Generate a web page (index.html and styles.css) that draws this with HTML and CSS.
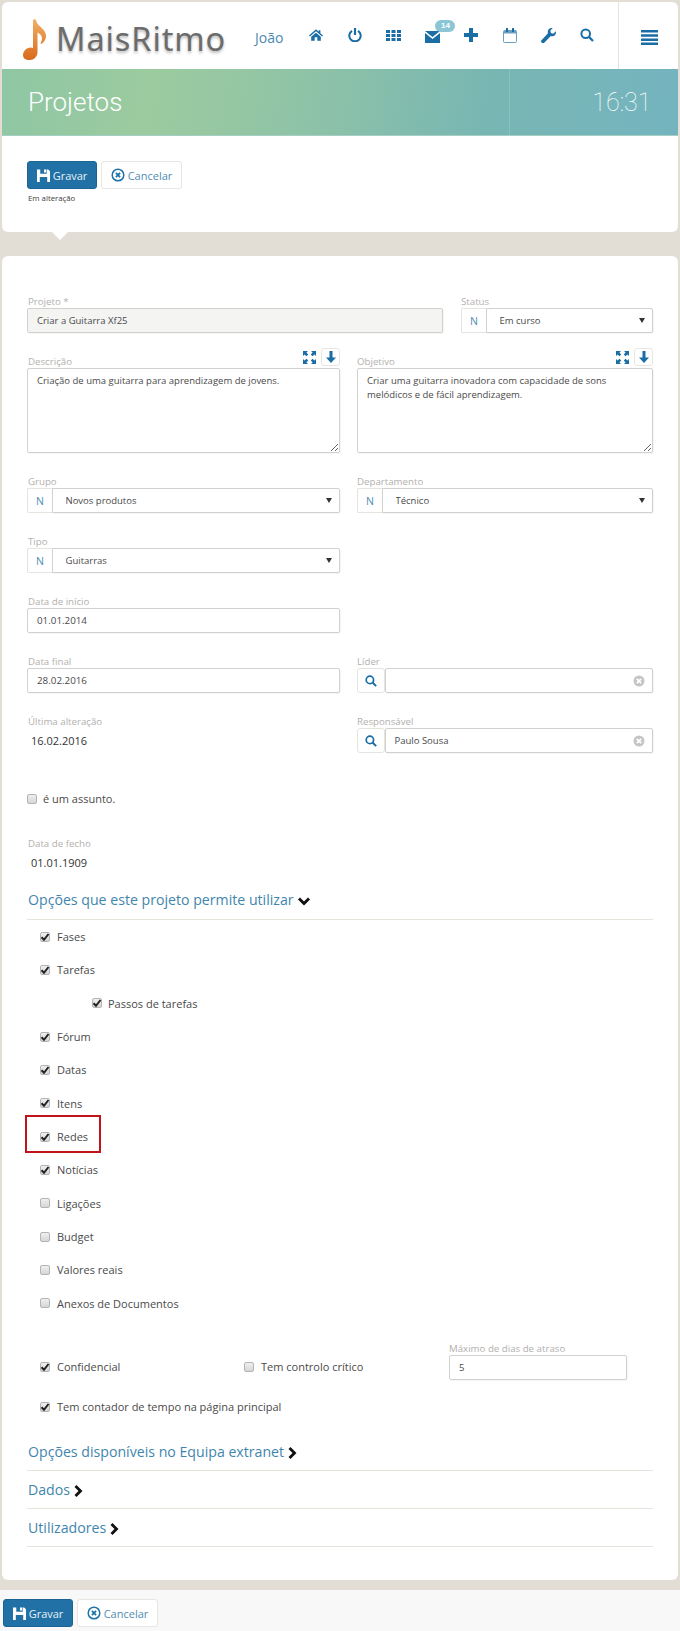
FILE: index.html
```html
<!DOCTYPE html>
<html lang="pt">
<head>
<meta charset="utf-8">
<title>Projetos</title>
<link rel="stylesheet" href="styles.css">
</head>
<body>
<svg class="defs" width="0" height="0" aria-hidden="true">
  <symbol id="i-save" viewBox="0 0 14 14"><path d="M0 .5h3.500v4.500h7V.5H12l2 2V14h-3V8.500H3V14H0z"/><path d="M7.500 .5H10v3.300H7.500z"/></symbol>
  <symbol id="i-cancel" viewBox="0 0 14 14"><circle cx="7" cy="7" r="5.800" fill="none" stroke="currentColor" stroke-width="1.500"/><path d="M4.900 4.900l4.200 4.200M9.100 4.900L4.900 9.100" stroke="currentColor" stroke-width="1.800" fill="none"/></symbol>
  <symbol id="i-clear" viewBox="0 0 12 12"><circle cx="6" cy="6" r="5.500"/><path d="M3.800 3.800l4.400 4.400M8.200 3.800L3.800 8.200" stroke="#fff" stroke-width="1.800" fill="none"/></symbol>
  <symbol id="i-search" viewBox="0 0 14 14"><circle cx="5.700" cy="5.700" r="4.300" fill="none" stroke="currentColor" stroke-width="2"/><path d="M8.800 8.800L13 13" stroke="currentColor" stroke-width="2.300" fill="none"/></symbol>
  <symbol id="i-expand" viewBox="0 0 13 13"><path d="M0 0h5L3.400 1.600 5.200 3.400 3.400 5.200 1.600 3.400 0 5zM13 0v5l-1.600-1.600-1.800 1.800-1.800-1.800 1.800-1.800L8 0zM0 13V8l1.600 1.600 1.800-1.800 1.800 1.800-1.800 1.800L5 13zM13 13H8l1.600-1.600-1.800-1.800 1.800-1.800 1.800 1.800L13 8z"/></symbol>
  <symbol id="i-down" viewBox="0 0 10 12"><path d="M3.500 0h3v6.500H10L5 12 0 6.500h3.500z"/></symbol>
  <symbol id="i-chev-d" viewBox="0 0 12 9"><path d="M0 2.500L2 .5l4 4 4-4 2 2-6 6z"/></symbol>
  <symbol id="i-chev-r" viewBox="0 0 9 12"><path d="M2.500 0l-2 2 4 4-4 4 2 2 6-6z"/></symbol>
  <symbol id="i-check" viewBox="0 0 10 10"><path d="M1.500 5.200L4 7.800 8.500 2" fill="none" stroke="#222" stroke-width="2"/></symbol>
</svg>

<main class="card card-top">
  <header class="topbar">
    <div class="logo">
      <svg class="logo-note" viewBox="0 0 24 41" width="24" height="41" aria-hidden="true">
        <defs><linearGradient id="note" x1="0" y1="0" x2="0" y2="1"><stop offset="0" stop-color="#efb064"/><stop offset="1" stop-color="#d9691c"/></linearGradient></defs>
        <path fill="url(#note)" d="M10 1c1-1.200 3-.8 3.200.8.400 2.600 2.400 4.400 5 6.600 3.400 3 5 5.800 4.800 9-.2 3.200-2 6-4.300 7.400-.8.400-1.400-.2-1-.9 1.300-2.400 1.700-4.700.8-6.800-.7-1.600-2.500-3-4-3.700V33c0 4.500-3.600 8-7.700 8C2.200 41 0 39 0 36c0-4 3.800-7.600 7.500-7.600 1 0 1.800.2 2.500.6z"/>
      </svg>
      <span class="logo-text">MaisRitmo</span>
    </div>
    <nav class="nav">
      <a class="nav-user">João</a>
      <a class="nav-item"><svg viewBox="0 0 16 13" width="14" height="12" fill="currentColor"><path d="M8 0L0 7l1 1.200L8 2.200l7 6L16 7l-3-2.600V1h-2v1.700zM2.500 8.600V13H6.500V9h3v4h4V8.600L8 3.800z"/></svg></a>
      <a class="nav-item"><svg viewBox="0 0 14 14" width="14" height="14" fill="none" stroke="currentColor" stroke-width="2"><path d="M4 2.800a5.700 5.700 0 1 0 6 0"/><path d="M7 0v7" stroke-width="2.200"/></svg></a>
      <a class="nav-item"><svg viewBox="0 0 15 11" width="15" height="11" fill="currentColor"><path d="M0 0h4v3H0zM5.500 0h4v3h-4zM11 0h4v3h-4zM0 4h4v3H0zM5.500 4h4v3h-4zM11 4h4v3h-4zM0 8h4v3H0zM5.500 8h4v3h-4zM11 8h4v3h-4z"/></svg></a>
      <a class="nav-item nav-mail"><svg viewBox="0 0 15 12" width="15" height="12" fill="currentColor"><path d="M0 0h15L7.500 6zM0 2l7.500 6L15 2v10H0z"/></svg><span class="badge">14</span></a>
      <a class="nav-item"><svg viewBox="0 0 14 14" width="14" height="14" fill="currentColor"><path d="M5 0h4v5h5v4H9v5H5V9H0V5h5z"/></svg></a>
      <a class="nav-item"><svg viewBox="0 0 14 15" width="14" height="15"><rect x=".5" y="2.500" width="13" height="12" rx="1" fill="none" stroke="#6a9fc4"/><path d="M1 2.500h12v3H1z" fill="#6a9fc4"/><path d="M3 0h2v4H3zM9 0h2v4H9z" fill="#1a6da5"/></svg></a>
      <a class="nav-item"><svg viewBox="0 0 15 15" width="15" height="15" fill="currentColor"><path d="M14.800 3.200c.6 2-.3 4-2.200 4.800-1 .4-2 .4-2.800.1L3 15c-.7.500-1.600.3-2.300-.4s-.9-1.500-.4-2.200L7 5.300c-.4-1-.3-2.200.2-3.200C8 .5 9.800-.3 11.700.2L9.300 2.600l.6 2.500 2.500.6z"/></svg></a>
      <a class="nav-item"><svg width="14" height="14" class="ic-inherit"><use href="#i-search"/></svg></a>
    </nav>
    <button class="menu-cell" type="button" aria-label="Menu">
      <svg viewBox="0 0 17 15" width="17" height="15" fill="currentColor"><path d="M0 0h17v2.500H0zM0 4.200h17v2.500H0zM0 8.400h17v2.500H0zM0 12.500h17V15H0z"/></svg>
    </button>
  </header>
  <div class="band">
    <h1 class="band-title">Projetos</h1>
    <div class="band-time">16:31</div>
  </div>
  <div class="actions">
    <div class="btn-row">
      <button class="btn btn-primary" type="button"><svg width="13" height="13" class="ic-fill"><use href="#i-save"/></svg>Gravar</button>
      <button class="btn btn-default" type="button"><svg width="14" height="14"><use href="#i-cancel"/></svg>Cancelar</button>
    </div>
    <p class="status-text">Em alteração</p>
  </div>
  <span class="pointer"></span>
</main>

<section class="card card-form">
  <div class="row row-status">
    <div class="field">
      <label class="lbl">Projeto *</label>
      <input class="ctl ctl-disabled" type="text" value="Criar a Guitarra Xf25" readonly>
    </div>
    <div class="field">
      <label class="lbl">Status</label>
      <div class="group"><span class="addon">N</span><div class="sel"><select class="ctl ctl-sel"><option>Em curso</option></select><span class="caret"></span></div></div>
    </div>
  </div>

  <div class="row">
    <div class="field">
      <div class="lbl-head"><label class="lbl">Descrição</label>
        <div class="tools"><svg width="13" height="13" class="ic-blue"><use href="#i-expand"/></svg><span class="tool-btn"><svg width="10" height="12" class="ic-blue"><use href="#i-down"/></svg></span></div>
      </div>
      <textarea class="ctl ctl-area">Criação de uma guitarra para aprendizagem de jovens.</textarea>
    </div>
    <div class="field">
      <div class="lbl-head"><label class="lbl">Objetivo</label>
        <div class="tools"><svg width="13" height="13" class="ic-blue"><use href="#i-expand"/></svg><span class="tool-btn"><svg width="10" height="12" class="ic-blue"><use href="#i-down"/></svg></span></div>
      </div>
      <textarea class="ctl ctl-area">Criar uma guitarra inovadora com capacidade de sons melódicos e de fácil aprendizagem.</textarea>
    </div>
  </div>

  <div class="row">
    <div class="field">
      <label class="lbl">Grupo</label>
      <div class="group"><span class="addon">N</span><div class="sel"><select class="ctl ctl-sel"><option>Novos produtos</option></select><span class="caret"></span></div></div>
    </div>
    <div class="field">
      <label class="lbl">Departamento</label>
      <div class="group"><span class="addon">N</span><div class="sel"><select class="ctl ctl-sel"><option>Técnico</option></select><span class="caret"></span></div></div>
    </div>
  </div>

  <div class="row">
    <div class="field">
      <label class="lbl">Tipo</label>
      <div class="group"><span class="addon">N</span><div class="sel"><select class="ctl ctl-sel"><option>Guitarras</option></select><span class="caret"></span></div></div>
    </div>
  </div>

  <div class="row">
    <div class="field">
      <label class="lbl">Data de início</label>
      <input class="ctl ctl-date" type="text" value="01.01.2014">
    </div>
  </div>

  <div class="row">
    <div class="field">
      <label class="lbl">Data final</label>
      <input class="ctl ctl-date" type="text" value="28.02.2016">
    </div>
    <div class="field">
      <label class="lbl">Líder</label>
      <div class="group"><span class="addon addon-search"><svg width="12" height="12" class="ic-inherit"><use href="#i-search"/></svg></span><div class="sel"><input class="ctl ctl-pick" type="text" value=""><svg class="clear" width="12" height="12"><use href="#i-clear"/></svg></div></div>
    </div>
  </div>

  <div class="row">
    <div class="field">
      <label class="lbl">Última alteração</label>
      <div class="value">16.02.2016</div>
    </div>
    <div class="field">
      <label class="lbl">Responsável</label>
      <div class="group"><span class="addon addon-search"><svg width="12" height="12" class="ic-inherit"><use href="#i-search"/></svg></span><div class="sel"><input class="ctl ctl-pick" type="text" value="Paulo Sousa"><svg class="clear" width="12" height="12"><use href="#i-clear"/></svg></div></div>
    </div>
  </div>

  <div class="check check-subject"><span class="cb"></span>é um assunto.</div>

  <div class="closing">
    <label class="lbl">Data de fecho</label>
    <div class="value">01.01.1909</div>
  </div>

  <h2 class="section section-open">Opções que este projeto permite utilizar <svg width="12" height="9"><use href="#i-chev-d"/></svg></h2>

  <ul class="options">
    <li class="check"><span class="cb on"><svg width="10" height="10"><use href="#i-check"/></svg></span>Fases</li>
    <li class="check"><span class="cb on"><svg width="10" height="10"><use href="#i-check"/></svg></span>Tarefas</li>
    <li class="check check-sub"><span class="cb on"><svg width="10" height="10"><use href="#i-check"/></svg></span>Passos de tarefas</li>
    <li class="check"><span class="cb on"><svg width="10" height="10"><use href="#i-check"/></svg></span>Fórum</li>
    <li class="check"><span class="cb on"><svg width="10" height="10"><use href="#i-check"/></svg></span>Datas</li>
    <li class="check"><span class="cb on"><svg width="10" height="10"><use href="#i-check"/></svg></span>Itens</li>
    <li class="check check-marked"><span class="cb on"><svg width="10" height="10"><use href="#i-check"/></svg></span>Redes<span class="red-box"></span></li>
    <li class="check"><span class="cb on"><svg width="10" height="10"><use href="#i-check"/></svg></span>Notícias</li>
    <li class="check"><span class="cb"></span>Ligações</li>
    <li class="check"><span class="cb"></span>Budget</li>
    <li class="check"><span class="cb"></span>Valores reais</li>
    <li class="check"><span class="cb"></span>Anexos de Documentos</li>
  </ul>

  <div class="extra">
    <div class="check check-raised"><span class="cb on"><svg width="10" height="10"><use href="#i-check"/></svg></span>Confidencial</div>
    <div class="check check-raised"><span class="cb"></span>Tem controlo crítico</div>
    <div class="field">
      <label class="lbl">Máximo de dias de atraso</label>
      <input class="ctl" type="text" value="5">
    </div>
  </div>
  <div class="check check-timer"><span class="cb on"><svg width="10" height="10"><use href="#i-check"/></svg></span>Tem contador de tempo na página principal</div>

  <div class="sections">
    <h2 class="section">Opções disponíveis no Equipa extranet <svg width="9" height="12"><use href="#i-chev-r"/></svg></h2>
    <h2 class="section">Dados <svg width="9" height="12"><use href="#i-chev-r"/></svg></h2>
    <h2 class="section">Utilizadores <svg width="9" height="12"><use href="#i-chev-r"/></svg></h2>
  </div>
</section>

<footer class="footer">
  <button class="btn btn-primary" type="button"><svg width="13" height="13" class="ic-fill"><use href="#i-save"/></svg>Gravar</button>
  <button class="btn btn-default" type="button"><svg width="14" height="14"><use href="#i-cancel"/></svg>Cancelar</button>
</footer>
</body>
</html>
```

FILE: styles.css
```css
* { box-sizing: border-box; }
html, body { margin: 0; padding: 0; }
body {
  background: #e2ded6;
  font-family: "Open Sans", "Liberation Sans", sans-serif;
  font-size: 10.5px;
  color: #4a4a4a;
  width: 680px;
  height: 1631px;
  overflow: hidden;
  padding-top: 2px;
}
.defs { position: absolute; }

.card { background: #fff; margin: 0 2px; border-radius: 6px; position: relative; }
.card-top { height: 229.5px; }
.card-form { margin-top: 24.5px; height: 1324px; padding: 39px 25px 0; }

/* top bar */
.topbar { height: 67px; display: flex; align-items: stretch; }
.logo { width: 253px; display: flex; align-items: flex-start; padding: 17px 0 0 21px; }
.logo-note { flex: none; }
.logo-text {
  font-family: "Noto Sans", "Open Sans", sans-serif;
  font-weight: 400;
  font-size: 32.5px;
  line-height: 40px;
  color: #6c6c6c;
  margin: 0 0 0 9px;
  letter-spacing: .9px;
  text-shadow: 0 2px 3px rgba(0,0,0,.28);
}
.nav { display: flex; align-items: center; flex: 1; color: #1a6da5; }
.nav-user { font-size: 14px; color: #4a88b0; width: 41.5px; padding-top: 4px; text-align: left; }
.nav-item { width: 38.8px; display: flex; justify-content: center; align-items: center; position: relative; margin-top: -1px; }
.nav-mail svg { margin-top: 3px; }
.badge {
  position: absolute; top: -8px; left: 22.5px;
  width: 20px; height: 12px; border-radius: 6px;
  background: #8ac6d5; color: #fff;
  font: bold 8px/12px "Liberation Sans", sans-serif; text-align: center;
}
.menu-cell {
  width: 60px; border: 0; border-left: 1px solid #e6e3dd; background: none;
  color: #1a6da5; padding: 3px 0 0 1px; margin: 0;
  display: flex; align-items: center; justify-content: center;
}
.ic-inherit { fill: currentColor; color: inherit; }

/* band */
.band {
  height: 67px; display: flex; align-items: center;
  background: linear-gradient(98deg, #8fc6a4 0%, #9ccb9f 22%, #8fc3a7 45%, #78b6b3 72%, #74b4bf 100%);
  border-bottom: 1px solid #a5cfc4;
  color: #fff;
}
.band-title { flex: none; width: 507px; margin: 0; padding: 0 0 0 26px; font: 300 26px/1 Roboto, sans-serif; }
.band-time {
  flex: 1; height: 100%; display: flex; align-items: center; justify-content: flex-end;
  padding: 1px 26.5px 0 0; border-left: 1px solid rgba(255,255,255,.14);
  font: 100 25px/1 Roboto, sans-serif;
}

/* actions */
.actions { padding: 25px 25px 0; }
.btn-row { display: flex; gap: 4px; }
.btn {
  height: 28px; border-radius: 3px; display: inline-flex; align-items: center; justify-content: center; gap: 3px;
  font: 11px "Open Sans", sans-serif; padding: 0; margin: 0;
}
.btn svg { flex: none; }
.btn-primary { width: 70px; background: #2171a6; border: 1px solid #1b6594; color: #e8f0f5; }
.ic-fill { fill: #fff; }
.btn-default { width: 81px; background: #fff; border: 1px solid #e8e6e0; color: #4f8cb5; }
.btn-default svg { color: #1d72a8; }
.status-text { margin: 4px 0 0 1px; font-size: 7.8px; line-height: 10px; color: #3c3c3c; }
.pointer {
  position: absolute; left: 50px; top: 229.5px; width: 0; height: 0;
  border-left: 8px solid transparent; border-right: 8px solid transparent; border-top: 8px solid #fff;
}

/* form */
.row { display: grid; grid-template-columns: 313px 296px; column-gap: 17px; margin-bottom: 22px; }
.row-status { grid-template-columns: 416px 192px; column-gap: 18px; }
.field { display: flex; flex-direction: column; min-width: 0; }
.lbl { display: block; height: 13px; line-height: 13px; font-size: 9.7px; color: #b2b0ad; white-space: nowrap; }
.row .field:first-child .lbl, .closing .lbl { padding-left: 1px; }
.lbl-head { height: 13px; display: flex; justify-content: space-between; align-items: flex-end; }
.tools { display: flex; align-items: center; gap: 5px; margin-bottom: 2px; }
.ic-blue { fill: #1a6da5; display: block; }
.tool-btn {
  width: 19px; height: 18px; border: 1px solid #e8e6e0; border-radius: 3px; background: #fff;
  display: flex; align-items: center; justify-content: center;
}
.ctl {
  display: block; width: 100%; height: 25px; margin: 0; padding: 0 9px;
  background: #fff; border: 1px solid #d2d1cd; border-radius: 2px;
  box-shadow: 1px 1px 0 rgba(0,0,0,.04);
  font: 9.5px "Open Sans", sans-serif; color: #4a4a4a; outline: none;
}
.ctl-disabled { background: #f4f4f3; }
.ctl-date { font-size: 9.8px; }
.ctl-area { height: 85px; padding: 5px 9px; line-height: 14px; resize: both; }
.group { display: flex; height: 25px; }
.addon {
  flex: none; width: 25px; display: flex; align-items: center; justify-content: center;
  border: 1px solid #e6e4df; border-right: 0; border-radius: 2px 0 0 2px; color: #4f8cb5; font-size: 10.5px;
}
.addon-search { width: 28px; color: #1a6da5; border-right: 1px solid #e6e4df; border-radius: 3px; }
.sel { flex: 1; position: relative; min-width: 0; }
.ctl-sel { appearance: none; -webkit-appearance: none; padding-left: 12.5px; border-radius: 0 2px 2px 0; }
.caret {
  position: absolute; right: 8px; top: 10px; width: 0; height: 0;
  border-left: 3px solid transparent; border-right: 3px solid transparent; border-top: 5px solid #333;
}
.ctl-pick { padding-left: 8.5px; padding-right: 24px; }
.clear { position: absolute; right: 8px; top: 6.500px; fill: #c6c5c3; }
.value { height: 25px; line-height: 25px; padding-left: 3px; font-size: 11px; color: #333; }
.row .field:first-child .value, .closing .value { padding-left: 4px; }

.check { display: flex; align-items: center; height: 25px; font-size: 11px; color: #4a4a4a; position: relative; }
.cb {
  flex: none; width: 10px; height: 10px; margin-right: 7px; border-radius: 2px;
  background: linear-gradient(#efefef, #d6d6d6); border: 1px solid #b4b4b4;
  position: relative;
}
.cb svg { position: absolute; left: -1px; top: -1px; display: block; }
.check-subject { margin-top: 33px; }
.check-subject .cb { margin-right: 6px; }
.check-sub .cb { margin-right: 6px; }
.closing { margin-top: 26px; }

.section {
  margin: 0; height: 38px; display: flex; align-items: center; gap: 4px; padding-left: 1px;
  font: 400 14.15px/1 "Open Sans", sans-serif; color: #3f86ad;
  border-bottom: 1px solid #e6e3dd;
}
.section-open { margin-top: 6px; height: 39px; }
.section svg { flex: none; fill: #111; margin-top: 2px; }

.options { list-style: none; margin: 0; padding: 0 0 0 13px; }
.options .check { height: 33.33px; }
.check-sub { padding-left: 52px; }
.red-box {
  position: absolute; left: -15px; top: -5px; width: 76px; height: 38px;
  border: 2px solid #c0141a; pointer-events: none;
}
.check-marked { z-index: 1; }

.extra {
  display: grid; grid-template-columns: 204px 205px 178px; align-items: end;
  padding-left: 13px; margin-top: 22.500px;
}
.check-raised { margin-bottom: 1px; }
.check-timer { margin: 14px 0 0 13px; }
.sections { margin-top: 14px; }

/* footer */
.footer {
  margin-top: 10px; height: 41px; background: #f8f8f8;
  display: flex; gap: 4px; padding: 9px 0 0 3px;
}
```
